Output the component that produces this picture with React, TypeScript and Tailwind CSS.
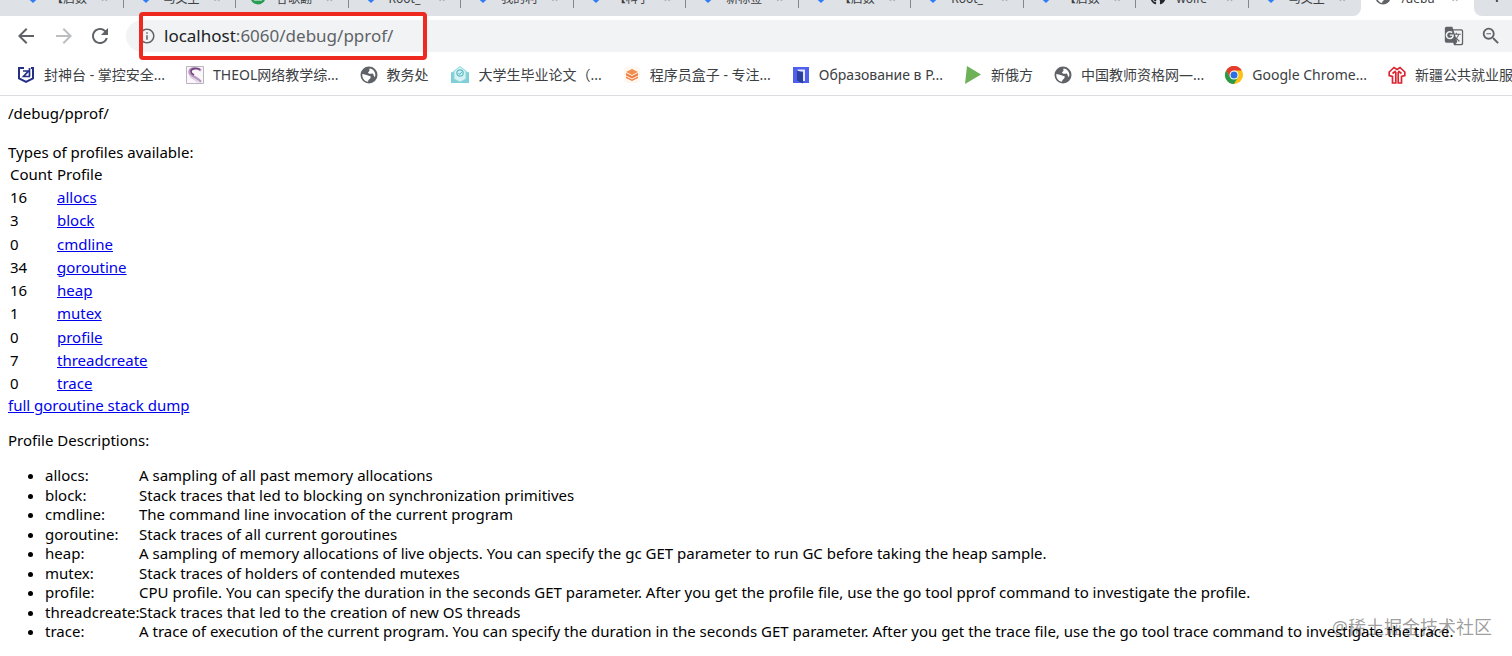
import type { ReactNode } from "react";
import {
  MdArrowBack,
  MdArrowForward,
  MdGTranslate,
  MdInfoOutline,
  MdOutlineZoomOut,
  MdRefresh,
} from "react-icons/md";
import { FaGithub } from "react-icons/fa";

const Diamond = () => (
  <svg viewBox="0 0 16 16" className="size-4 shrink-0" fill="#2f7df6">
    <path d="M8 1l7 6.500-7 6.500-7-6.500z" />
  </svg>
);

const GreenDot = () => (
  <svg viewBox="0 0 16 16" className="size-4 shrink-0">
    <circle cx="8" cy="8" r="7.500" fill="#2a9d55" />
    <path d="M4 8.500h8v3H4z" fill="#fff" />
  </svg>
);

const Globe = ({ className = "size-4.5" }: { className?: string }) => (
  <svg viewBox="0 0 18 18" className={`${className} shrink-0`}>
    <circle cx="9" cy="9" r="8.500" fill="#5f6368" />
    <path
      d="M2.300 8.200C4 7.800 5 9 6.500 9S8 10 9.500 10s1.500 1 .8 2.200-2 1-2.300 3.500C4.500 15.300 2 12 2.300 8.200z"
      fill="#fff"
    />
    <path d="M9.500 2.500c-.5 1.500.5 2-.5 3S7.500 6.500 9 7.500s3-.8 4 .2.500 3 2 3.300c1.300-3.500-.8-8-5.500-8.500z" fill="#fff" />
  </svg>
);

const ShieldIcon = () => (
  <svg viewBox="0 0 18 18" className="size-4.5 shrink-0" fill="none" stroke="#252f85">
    <path d="M7 2H2v10.500L9 16l7-3.500V2h-2" strokeWidth="2" />
    <path d="M6 5h5.500L6.500 10.500H13M12.500 2v8.500" strokeWidth="1.700" />
  </svg>
);

const TheolIcon = () => (
  <svg viewBox="0 0 18 18" className="size-4.5 shrink-0" fill="none">
    <path d="M.5.5h17v17H.5z" fill="#faf6fa" stroke="#b9b3bd" />
    <path d="M15 4.500C11 1 4 1.500 3.500 5.500S7 10 9.500 11.500s4 2.500 5.500 4.500" stroke="#b79abf" strokeWidth="2.400" />
    <path d="M14 3.500C10.500 1.500 5 2.500 5 5.500c0 2 1.500 2.500 3 3.500" stroke="#74437f" strokeWidth="1.600" />
    <path d="M4 10c2 3 6 3 8 6.500" stroke="#ddcfe2" strokeWidth="1.500" />
  </svg>
);

const ThesisIcon = () => (
  <svg viewBox="0 0 20 18" className="h-4.5 w-5 shrink-0" fill="none">
    <path d="M1 6.500L5 5v8l5 2.500L15 13V5l4 1.500V17H1z" fill="#7fd0d6" />
    <path d="M4 5l6-4.500L16 5v8l-6 3-6-3z" fill="#d8f1f3" stroke="#8fd6db" />
    <circle cx="10" cy="7" r="3.200" stroke="#5bbcc6" strokeWidth="1.200" />
    <path d="M8.500 7l1.200 1.300 2.300-2.500" stroke="#47b3c0" />
  </svg>
);

const BoxIcon = () => (
  <svg viewBox="0 0 18 18" className="size-4.5 shrink-0">
    <rect x="1" y="1" width="16" height="16" rx="4" fill="#fff6ee" />
    <path d="M9 3l6 3-6 3-6-3z" fill="#f0904f" />
    <path d="M3 7l6 3 6-3v2.500l-6 3-6-3zM3 10.500l6 3 6-3V12l-6 3-6-3z" fill="#ef7f40" />
  </svg>
);

const DoorIcon = () => (
  <svg viewBox="0 0 18 18" className="size-4.5 shrink-0">
    <path d="M1 1h16v16H1z" fill="#4f5fee" />
    <path d="M5.500 3.500h7.500V15h-2V5.500H5.500z" fill="#e4e8ff" />
    <path d="M5 4.500l6 2v11l-6-3z" fill="#2b3f9c" />
  </svg>
);

const PlayIcon = () => (
  <svg viewBox="0 0 18 18" className="size-4.5 shrink-0">
    <path d="M3 0l14 8.500L1 18z" fill="#6db158" />
  </svg>
);

const ChromeIcon = () => (
  <svg viewBox="0 0 18 18" className="size-4.5 shrink-0">
    <circle cx="9" cy="9" r="9" fill="#fbc116" />
    <path d="M1.200 4.500A9 9 0 0 1 16.800 4.500H9L5.100 11.250z" fill="#e33b2e" />
    <path d="M1.200 4.500A9 9 0 0 0 9 18l3.900-6.750H5.100z" fill="#2a9a48" />
    <circle cx="9" cy="9" r="4.500" fill="#fff" />
    <circle cx="9" cy="9" r="3.500" fill="#2b6fe0" />
  </svg>
);

const JobsIcon = () => (
  <svg viewBox="0 0 18 18" className="size-4.5 shrink-0" fill="none" stroke="#dc2530" strokeWidth="1.700">
    <path d="M7.800 6v11H4.500v-6.500L1.200 9.500V6L6 1.500l3 2 3-2L16.800 6v3.500l-3.300 1V17h-3.300V6" />
    <path d="M4.500 7.500L7.800 5M13.500 7.500L10.200 5" />
  </svg>
);

const tabs: { icon: ReactNode; title: string }[] = [
  { icon: <Diamond />, title: "【启数" },
  { icon: <Diamond />, title: "马文主" },
  { icon: <GreenDot />, title: "谷歌翻" },
  { icon: <Diamond />, title: "Root_" },
  { icon: <Diamond />, title: "我的利" },
  { icon: <Diamond />, title: "【科学" },
  { icon: <Diamond />, title: "新标签" },
  { icon: <Diamond />, title: "【启数" },
  { icon: <Diamond />, title: "Root_" },
  { icon: <Diamond />, title: "【启数" },
  { icon: <FaGithub className="size-4 shrink-0 text-[#24292e]" />, title: "wolfe" },
  { icon: <Diamond />, title: "马文主" },
  { icon: <Globe className="size-4" />, title: "/debu" },
];

const bookmarks: { icon: ReactNode; title: string }[] = [
  { icon: <ShieldIcon />, title: "封神台 - 掌控安全..." },
  { icon: <TheolIcon />, title: "THEOL网络教学综..." },
  { icon: <Globe />, title: "教务处" },
  { icon: <ThesisIcon />, title: "大学生毕业论文（..." },
  { icon: <BoxIcon />, title: "程序员盒子 - 专注..." },
  { icon: <DoorIcon />, title: "Образование в Р..." },
  { icon: <PlayIcon />, title: "新俄方" },
  { icon: <Globe />, title: "中国教师资格网—..." },
  { icon: <ChromeIcon />, title: "Google Chrome..." },
  { icon: <JobsIcon />, title: "新疆公共就业服" },
];

const profiles = [
  { count: 16, name: "allocs", text: "A sampling of all past memory allocations" },
  { count: 3, name: "block", text: "Stack traces that led to blocking on synchronization primitives" },
  { count: 0, name: "cmdline", text: "The command line invocation of the current program" },
  { count: 34, name: "goroutine", text: "Stack traces of all current goroutines" },
  {
    count: 16,
    name: "heap",
    text: "A sampling of memory allocations of live objects. You can specify the gc GET parameter to run GC before taking the heap sample.",
  },
  { count: 1, name: "mutex", text: "Stack traces of holders of contended mutexes" },
  {
    count: 0,
    name: "profile",
    text: "CPU profile. You can specify the duration in the seconds GET parameter. After you get the profile file, use the go tool pprof command to investigate the profile.",
  },
  { count: 7, name: "threadcreate", text: "Stack traces that led to the creation of new OS threads" },
  {
    count: 0,
    name: "trace",
    text: "A trace of execution of the current program. You can specify the duration in the seconds GET parameter. After you get the trace file, use the go tool trace command to investigate the trace.",
  },
];

const TabStrip = () => (
  <div className="flex h-4 items-end overflow-hidden bg-white text-xs text-[#3c4043]">
    <div className="h-9 w-[11px] bg-[#dee1e6]" />
    {tabs.map((tab, i) => {
      const active = i === tabs.length - 1;
      const last = i === tabs.length - 2;
      return (
        <div
          key={i}
          className={`h-9 min-w-0 flex-1 ${active ? "bg-white" : "bg-[#dee1e6]"} ${last ? "rounded-br-lg" : ""}`}
        >
          <div className={`flex h-7 items-center gap-2.5 pt-1.5 pl-3.5 ${active || last ? "" : "border-r border-[#84888e]"}`}>
            {tab.icon}
            <span className="w-11 overflow-hidden pt-1 whitespace-nowrap">{tab.title}</span>
            <span className="-ml-1 pt-1 text-[#9aa0a6]">×</span>
          </div>
        </div>
      );
    })}
    <div className="h-9 w-9.5 rounded-bl-lg bg-[#dee1e6] pl-4 text-2xl">+</div>
  </div>
);

const Toolbar = () => (
  <div className="relative flex h-10 items-center pl-3.5 text-[#5f6368]">
    <button aria-label="Back" className="mr-3.5">
      <MdArrowBack className="size-6" />
    </button>
    <button aria-label="Forward" className="mr-3 text-[#bcbec1]">
      <MdArrowForward className="size-6" />
    </button>
    <button aria-label="Reload">
      <MdRefresh className="size-6" />
    </button>
    <div className="ml-3.5 flex h-8 flex-1 items-center rounded-l-full bg-[#f1f3f4] pl-3 text-[17px]">
      <MdInfoOutline className="mr-2 size-4.5" />
      <label htmlFor="address" className="text-[#202124]">
        localhost
      </label>
      <input id="address" defaultValue=":6060/debug/pprof/" className="min-w-0 flex-1 bg-transparent outline-none" />
      <button aria-label="Translate" className="mr-4">
        <MdGTranslate className="size-5" />
      </button>
      <button aria-label="Zoom out" className="mr-2.5">
        <MdOutlineZoomOut className="size-5.5" />
      </button>
    </div>
    <div className="pointer-events-none absolute -top-1 left-[139px] h-12 w-72 rounded-sm border-4 border-[#ee2a20]" />
  </div>
);

const Bookmarks = () => (
  <nav className="flex h-10 items-center gap-[21px] overflow-hidden border-b border-[#dadce0] pb-0.5 pl-[17px] text-sm text-[#3c4043]">
    {bookmarks.map((b) => (
      <a key={b.title} href="#" className="flex shrink-0 items-center gap-[9px] whitespace-nowrap">
        {b.icon}
        {b.title}
      </a>
    ))}
  </nav>
);

const App = () => {
  return (
    <div className="relative overflow-hidden bg-white font-['Noto_Sans','Noto_Sans_CJK_SC',sans-serif]">
      <TabStrip />
      <Toolbar />
      <Bookmarks />
      <main className="px-2 pt-[7px] pb-3 text-[15px] leading-5 text-black">
        <p>/debug/pprof/</p>
        <p className="mt-[19px]">Types of profiles available:</p>
        <table className="h-[233px]">
          <tbody>
            <tr>
              <th scope="col" className="w-[49px] pl-0.5 text-left font-normal">
                Count
              </th>
              <th scope="col" className="text-left font-normal">
                Profile
              </th>
            </tr>
            {profiles.map((p) => (
              <tr key={p.name}>
                <td className="pl-0.5">{p.count}</td>
                <td>
                  <a href="#" className="text-[#0000ee] underline">
                    {p.name}
                  </a>
                </td>
              </tr>
            ))}
          </tbody>
        </table>
        <a href="#" className="text-[#0000ee] underline">
          full goroutine stack dump
        </a>
        <p className="mt-[15px]">Profile Descriptions:</p>
        <ul className="mt-[15px] grid h-44 list-disc auto-rows-fr pl-[37px] whitespace-nowrap">
          {profiles.map((p) => (
            <li key={p.name}>
              <span className="inline-block w-[94px]">{p.name}:</span>
              {p.text}
            </li>
          ))}
        </ul>
      </main>
      <div className="pointer-events-none absolute right-5 bottom-3 text-lg text-black/40">@稀土掘金技术社区</div>
    </div>
  );
};

export default App;
